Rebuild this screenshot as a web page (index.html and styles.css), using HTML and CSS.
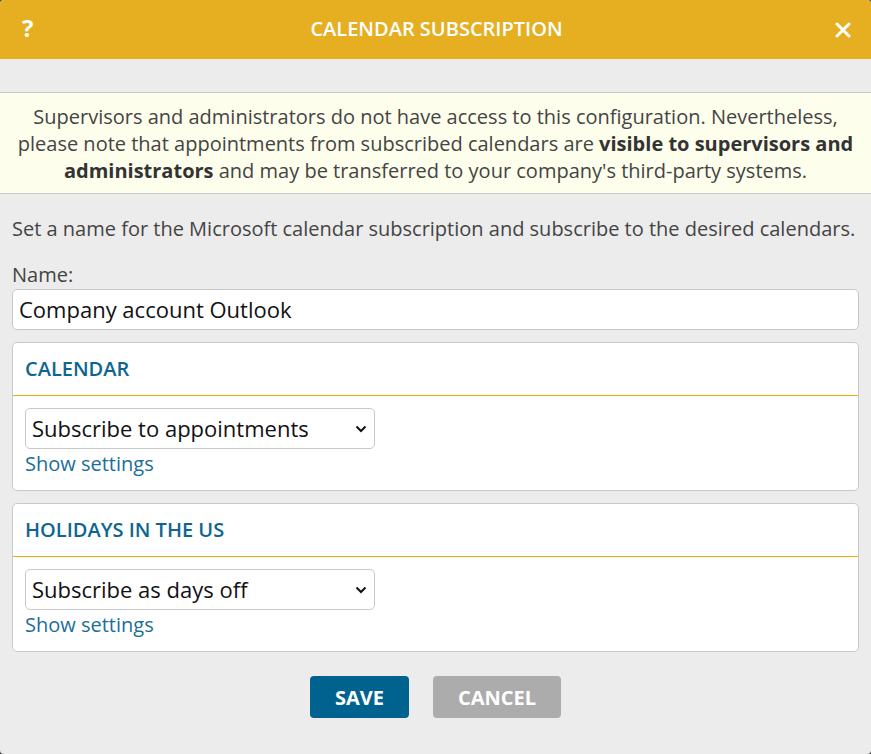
FILE: index.html
```html
<!DOCTYPE html>
<html lang="en">
<head>
<meta charset="utf-8">
<title>Calendar subscription</title>
<link rel="stylesheet" href="styles.css">
</head>
<body>
<div class="dialog">
  <header class="dlg-head">
    <span class="help">?</span>
    <h1 class="title">CALENDAR SUBSCRIPTION</h1>
    <span class="close" aria-label="Close">
      <svg width="16" height="16" viewBox="0 0 16 16"><path d="M2 2 L14 14 M14 2 L2 14" stroke="#fff" stroke-width="3" stroke-linecap="round"/></svg>
    </span>
  </header>
  <div class="dlg-body">
    <div class="notice">Supervisors and administrators do not have access to this configuration. Nevertheless, please note that appointments from subscribed calendars are <b>visible to supervisors and administrators</b> and may be transferred to your company's third-party systems.</div>
    <div class="content">
      <p class="intro">Set a name for the Microsoft calendar subscription and subscribe to the desired calendars.</p>
      <label class="label">Name:</label>
      <div class="input">Company account Outlook</div>
      <section class="card">
        <div class="card-head">CALENDAR</div>
        <div class="card-body">
          <div class="select">Subscribe to appointments<svg class="chev" width="12" height="8" viewBox="0 0 12 8"><path d="M1.5 1.5 L6 6 L10.5 1.5" fill="none" stroke="#111" stroke-width="2"/></svg></div>
          <a class="link">Show settings</a>
        </div>
      </section>
      <section class="card">
        <div class="card-head">HOLIDAYS IN THE US</div>
        <div class="card-body">
          <div class="select">Subscribe as days off<svg class="chev" width="12" height="8" viewBox="0 0 12 8"><path d="M1.5 1.5 L6 6 L10.5 1.5" fill="none" stroke="#111" stroke-width="2"/></svg></div>
          <a class="link">Show settings</a>
        </div>
      </section>
      <div class="actions">
        <button class="btn btn-save">SAVE</button>
        <button class="btn btn-cancel">CANCEL</button>
      </div>
    </div>
  </div>
</div>
</body>
</html>
```
FILE: styles.css
```css
html, body {
  margin: 0;
  padding: 0;
  background: #4a4a4a;
}
body {
  font-family: "Open Sans", "Liberation Sans", sans-serif;
  color: #444;
}
.dialog {
  width: 871px;
  height: 754px;
  background: #ececec;
  border-radius: 4px;
  overflow: hidden;
  display: flex;
  flex-direction: column;
}
.dlg-head {
  height: 59px;
  background: #e5af21;
  display: flex;
  align-items: center;
  justify-content: space-between;
  padding: 0 20px 0 22px;
  color: #fff;
}
.help {
  font-size: 24px;
  font-weight: 700;
  width: 16px;
  line-height: 1;
  margin-top: -3px;
}
.title {
  margin: 0;
  font-size: 20px;
  font-weight: 600;
  margin-top: -2px;
}
.close {
  width: 16px;
  height: 16px;
  display: flex;
}
.dlg-body {
  padding-top: 33px;
}
.notice {
  background: #fefeec;
  border-top: 1px solid #c8caca;
  border-bottom: 1px solid #c8caca;
  text-align: center;
  font-size: 20px;
  line-height: 27px;
  padding: 10px 12px 9px;
  color: #444;
}
.notice b {
  font-weight: 700;
  color: #333;
}
.content {
  padding: 0 12px;
}
.intro {
  margin: 21px 0 0;
  font-size: 20px;
  line-height: 27px;
}
.label {
  display: block;
  margin-top: 19px;
  font-size: 20px;
  line-height: 27px;
}
.input {
  margin-top: 1px;
  height: 39px;
  background: #fff;
  border: 1px solid #c6c8c8;
  border-radius: 5px;
  font-size: 22px;
  line-height: 39px;
  padding: 0 6px;
  color: #111;
}
.card {
  margin-top: 12px;
  background: #fff;
  border: 1px solid #c8caca;
  border-radius: 5px;
}
.card + .card {
  margin-top: 12px;
}
.card-head {
  height: 52px;
  border-bottom: 1px solid #e8a90c;
  color: #0e6690;
  font-weight: 600;
  font-size: 20px;
  line-height: 52px;
  padding-left: 12px;
}
.card-body {
  padding: 12px 12px 13px;
}
.select {
  height: 39px;
  border: 1px solid #c6c8c8;
  border-radius: 5px;
  font-size: 22px;
  line-height: 39px;
  padding: 0 0 0 6px;
  box-sizing: content-box;
  width: 342px;
  color: #111;
  display: flex;
  justify-content: space-between;
  align-items: center;
}
.chev {
  margin-right: 7px;
}
.link {
  display: block;
  margin-top: 1px;
  color: #1a6e9a;
  font-size: 20px;
  line-height: 27px;
}
.actions {
  margin-top: 24px;
  display: flex;
  justify-content: center;
  gap: 24px;
}
.btn {
  height: 42px;
  border: 0;
  border-radius: 4px;
  color: #fff;
  font-family: "Open Sans", "Liberation Sans", sans-serif;
  font-weight: 700;
  font-size: 20px;
  padding: 0;
}
.btn-save {
  width: 99px;
  background: #00628f;
}
.btn-cancel {
  width: 128px;
  background: #acacac;
}
```
